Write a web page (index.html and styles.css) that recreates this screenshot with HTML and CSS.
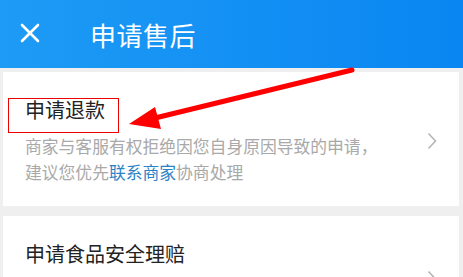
FILE: index.html
```html
<!DOCTYPE html>
<html lang="zh-CN">

<head>
    <meta charset="UTF-8">
    <meta name="viewport" content="width=device-width, initial-scale=1.0">
    <title>申请售后</title>
    <link rel="stylesheet" href="styles.css">
</head>

<body>
    <div class="header">
        <svg class="close" width="20" height="20" viewBox="0 0 20 20">
            <path d="M2 2 L18 18 M18 2 L2 18" stroke="#fff" stroke-width="2.6" stroke-linecap="round" />
        </svg>
        <h1>申请售后</h1>
    </div>

    <div class="list">
        <div class="card">
            <div class="card-body">
                <div class="card-title marked">申请退款</div>
                <div class="card-desc">商家与客服有权拒绝因您自身原因导致的申请，<br>建议您优先<span class="link">联系商家</span>协商处理</div>
            </div>
            <svg class="chevron" width="10" height="18" viewBox="0 0 10 18">
                <path d="M1.5 1.5 L8.5 9 L1.5 16.5" fill="none" stroke="#b5b5b5" stroke-width="1.6" />
            </svg>
        </div>

        <div class="card">
            <div class="card-body">
                <div class="card-title">申请食品安全理赔</div>
                <div class="card-desc">如收货后遇到食品质量，许商家联系理赔，可申请</div>
            </div>
            <svg class="chevron chevron-low" width="10" height="18" viewBox="0 0 10 18">
                <path d="M1.5 1.5 L8.5 9 L1.5 16.5" fill="none" stroke="#b5b5b5" stroke-width="1.6" />
            </svg>
        </div>
    </div>

    <!-- arrow drawn over the page -->
    <svg class="arrow" width="463" height="277" viewBox="0 0 463 277">
        <line x1="352" y1="70" x2="155" y2="118" stroke="#ff0000" stroke-width="5" stroke-linecap="round" />
        <polygon points="129,124 155,107 161,129" fill="#ff0000" />
    </svg>
</body>

</html>
```

FILE: styles.css
```css
body {
    font-family: "Noto Sans CJK SC", "Noto Sans", sans-serif;
    margin: 0;
    padding: 0;
    background-color: #efefef;
    color: #333;
    width: 463px;
    height: 277px;
    overflow: hidden;
}

.header {
    height: 68px;
    display: flex;
    align-items: center;
    background: linear-gradient(90deg, #1d9bf5, #0a86f2);
    color: #fff;
}

.close {
    margin-left: 20px;
    margin-top: -2px;
}

.header h1 {
    margin: 0 0 0 50px;
    font-size: 26px;
    font-weight: normal;
    letter-spacing: 0.5px;
}

.list {
    padding: 4px 4px 0 3px;
    display: flex;
    flex-direction: column;
    gap: 10px;
}

.card {
    background-color: #fff;
    display: flex;
    padding: 24px 22px 21px 22px;
}

.card-body {
    flex: 1;
}

.card-title {
    font-size: 20px;
    line-height: 28px;
    color: #222;
    margin-bottom: 9px;
}

.marked {
    display: inline-block;
    position: relative;
}

.marked::after {
    content: "";
    position: absolute;
    left: -17px;
    top: 2px;
    width: 111px;
    height: 35px;
    box-sizing: border-box;
    border: 1.5px solid #e00;
}

.card-desc {
    font-size: 16.8px;
    line-height: 26px;
    color: #a9a9a9;
}

.link {
    color: #2b83c6;
}

.chevron {
    align-self: center;
    margin-left: 8px;
}

.chevron-low {
    align-self: flex-start;
    margin-top: 30px;
}

.arrow {
    position: absolute;
    left: 0;
    top: 0;
    pointer-events: none;
}
```
